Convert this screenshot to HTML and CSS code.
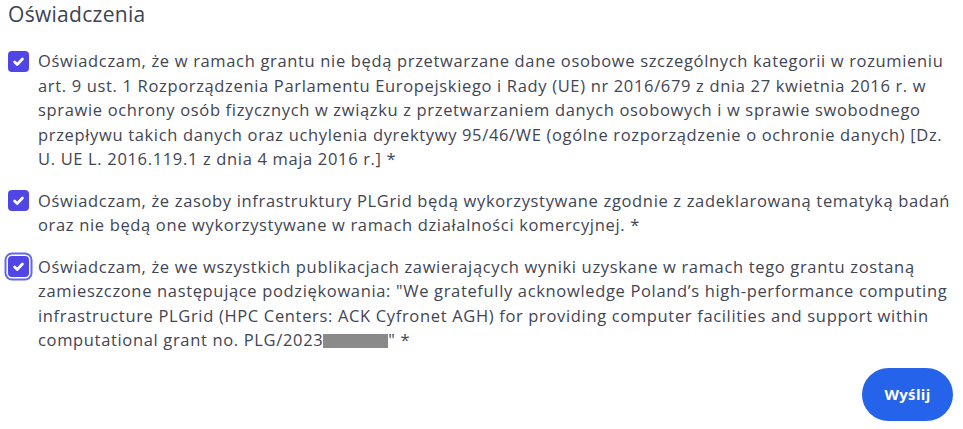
FILE: index.html
```html
<!DOCTYPE html>
<html lang="pl">
<head>
<meta charset="utf-8">
<link rel="stylesheet" href="styles.css">
</head>
<body>
<div class="page">
  <h2 class="title">Oświadczenia</h2>
  <div class="list">
    <label class="item">
      <span class="box"><svg viewBox="0 0 16 16"><path d="M4.3 8.4l2.5 2.4 4.9-5.1" /></svg></span>
      <span class="text">Oświadczam, że w ramach grantu nie będą przetwarzane dane osobowe szczególnych kategorii w rozumieniu<br>art. 9 ust. 1 Rozporządzenia Parlamentu Europejskiego i Rady (UE) nr 2016/679 z dnia 27 kwietnia 2016 r. w<br>sprawie ochrony osób fizycznych w związku z przetwarzaniem danych osobowych i w sprawie swobodnego<br>przepływu takich danych oraz uchylenia dyrektywy 95/46/WE (ogólne rozporządzenie o ochronie danych) [Dz.<br>U. UE L. 2016.119.1 z dnia 4 maja 2016 r.] *</span>
    </label>
    <label class="item">
      <span class="box"><svg viewBox="0 0 16 16"><path d="M4.3 8.4l2.5 2.4 4.9-5.1" /></svg></span>
      <span class="text">Oświadczam, że zasoby infrastruktury PLGrid będą wykorzystywane zgodnie z zadeklarowaną tematyką badań<br>oraz nie będą one wykorzystywane w ramach działalności komercyjnej. *</span>
    </label>
    <label class="item">
      <span class="box focus"><svg viewBox="0 0 16 16"><path d="M4.3 8.4l2.5 2.4 4.9-5.1" /></svg></span>
      <span class="text">Oświadczam, że we wszystkich publikacjach zawierających wyniki uzyskane w ramach tego grantu zostaną<br>zamieszczone następujące podziękowania: "We gratefully acknowledge Poland’s high-performance computing<br>infrastructure PLGrid (HPC Centers: ACK Cyfronet AGH) for providing computer facilities and support within<br>computational grant no. PLG/2023<span class="redact"></span>" *</span>
    </label>
  </div>
  <div class="actions">
    <button class="submit">Wyślij</button>
  </div>
</div>
</body>
</html>
```
FILE: styles.css
```css
html, body {
  margin: 0;
  padding: 0;
  background: #ffffff;
}
.page {
  padding: 0 8px;
  font-family: "Open Sans", "DejaVu Sans", sans-serif;
  color: #3f4553;
}
.title {
  margin: 0 0 21px 0;
  font-size: 21px;
  line-height: 28px;
  font-weight: 400;
  color: #3b4354;
  letter-spacing: 0.3px;
}
.list {
  display: flex;
  flex-direction: column;
  gap: 17px;
}
.item {
  display: flex;
  align-items: flex-start;
  gap: 9px;
}
.box {
  flex: none;
  width: 21px;
  height: 21px;
  margin-top: 1.5px;
  border-radius: 4px;
  background: #4f46e5;
  display: flex;
  align-items: center;
  justify-content: center;
}
.box svg {
  width: 17px;
  height: 17px;
  fill: none;
  stroke: #ffffff;
  stroke-width: 2.6;
  stroke-linecap: round;
  stroke-linejoin: round;
}
.box.focus {
  box-shadow: 0 0 0 1.5px #ffffff, 0 0 0 3.5px #6366f1;
}
.text {
  font-size: 16.5px;
  line-height: 24.5px;
  white-space: nowrap;
  letter-spacing: 0.66px;
}
.redact {
  display: inline-block;
  width: 65px;
  height: 14px;
  background: #8a8a8a;
  vertical-align: -2px;
}
.actions {
  display: flex;
  justify-content: flex-end;
  margin-top: 15px;
  padding-right: 2px;
}
.submit {
  width: 91px;
  height: 53px;
  border: none;
  border-radius: 27px;
  background: #2563eb;
  color: #ffffff;
  font-family: "Open Sans", "DejaVu Sans", sans-serif;
  font-weight: 700;
  font-size: 15px;
  letter-spacing: 0.3px;
}
```
